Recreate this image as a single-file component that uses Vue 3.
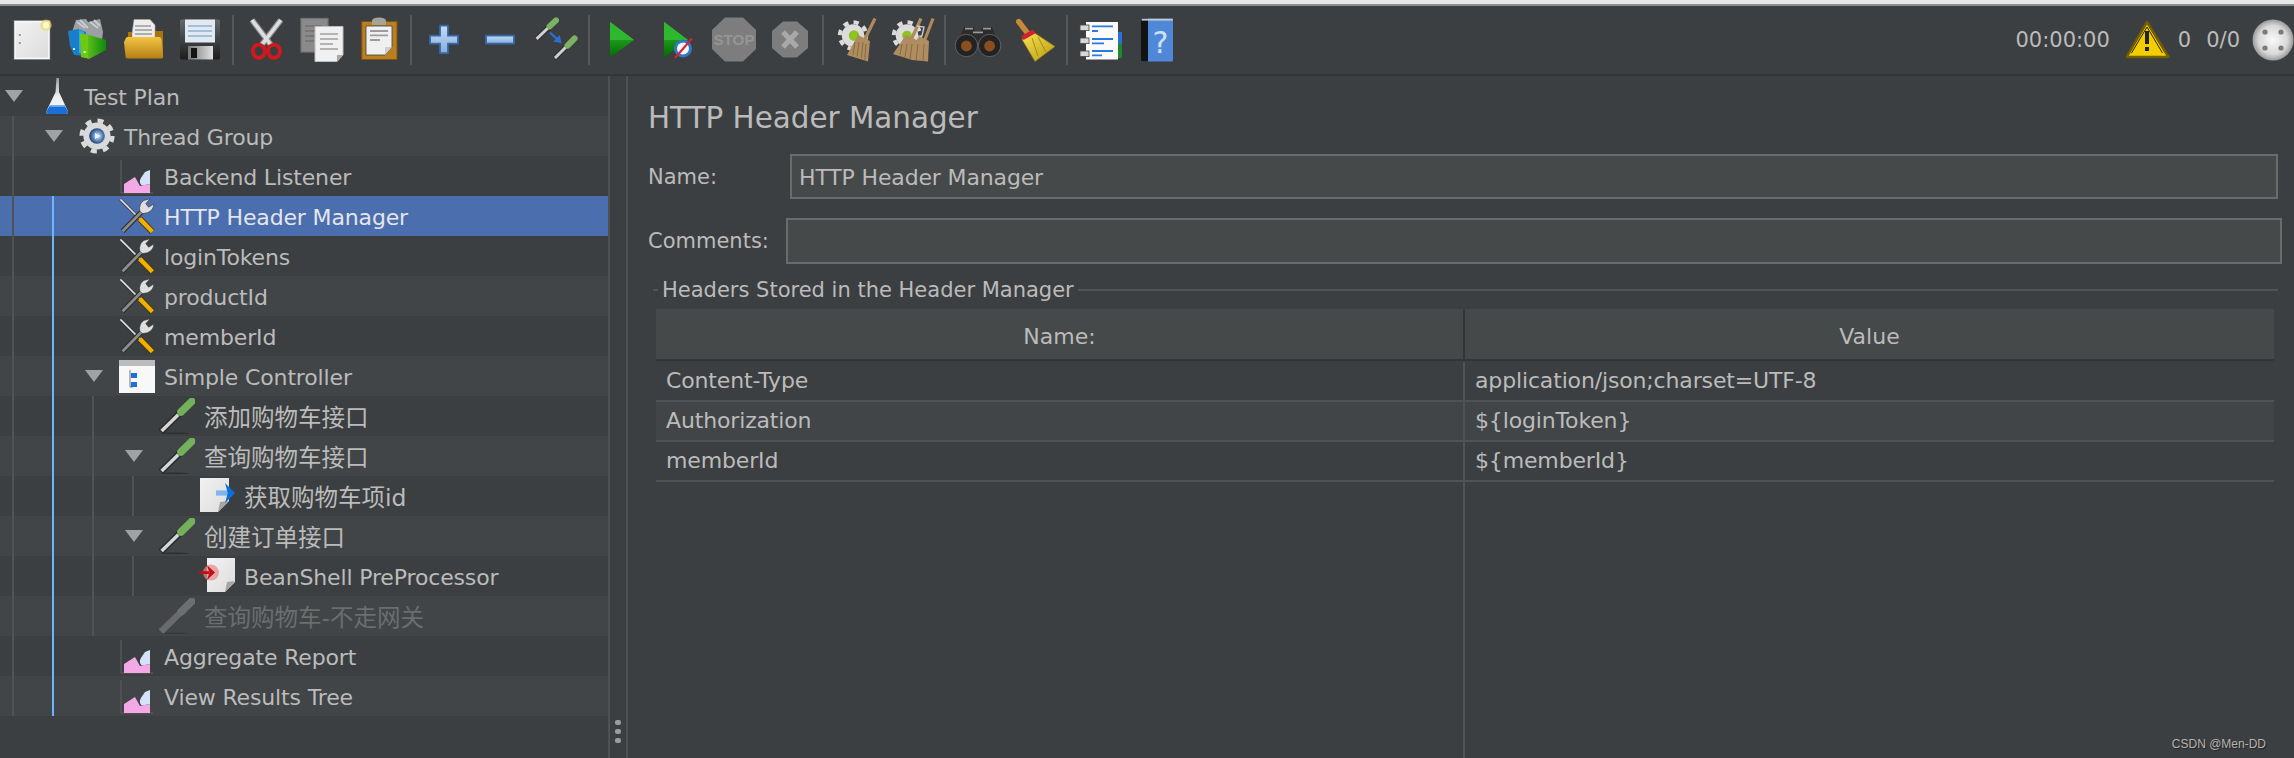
<script setup>
import { computed } from 'vue'

const toolbar = [
  ['new', 'templates', 'open', 'save'],
  ['cut', 'copy', 'paste'],
  ['plus', 'minus', 'toggle'],
  ['play', 'playnt', 'stop', 'shutdown'],
  ['clear', 'clearall'],
  ['search', 'broom'],
  ['fn', 'help'],
]

const ROW = 40
const INDENT = 40

const nodes = [
  { name: 'Test Plan', icon: 'flask', depth: 0, open: true },
  { name: 'Thread Group', icon: 'gear', depth: 1, open: true, lead: true },
  { name: 'Backend Listener', icon: 'chart', depth: 2 },
  { name: 'HTTP Header Manager', icon: 'tools', depth: 2, selected: true },
  { name: 'loginTokens', icon: 'tools', depth: 2 },
  { name: 'productId', icon: 'tools', depth: 2 },
  { name: 'memberId', icon: 'tools', depth: 2 },
  { name: 'Simple Controller', icon: 'ctrl', depth: 2, open: true },
  { name: '添加购物车接口', icon: 'dropper', depth: 3, cjk: true },
  { name: '查询购物车接口', icon: 'dropper', depth: 3, open: true, cjk: true },
  { name: '获取购物车项id', icon: 'post', depth: 4, cjk: true },
  { name: '创建订单接口', icon: 'dropper', depth: 3, open: true, cjk: true },
  { name: 'BeanShell PreProcessor', icon: 'pre', depth: 4 },
  { name: '查询购物车-不走网关', icon: 'dropper-off', depth: 3, cjk: true, disabled: true },
  { name: 'Aggregate Report', icon: 'chart', depth: 2 },
  { name: 'View Results Tree', icon: 'chart', depth: 2 },
]

// vertical tree lines, one per expanded node
const guides = computed(() => {
  const out = []
  nodes.forEach((n, i) => {
    if (!n.open) return
    let end = i + 1
    while (end < nodes.length && nodes[end].depth > n.depth) end++
    out.push({
      lead: n.lead,
      left: 12 + n.depth * INDENT,
      top: (i + 1 + (n.lead ? 1 : 0)) * ROW,
      height: (end - i - 1 - (n.lead ? 1 : 0)) * ROW,
    })
  })
  return out
})

const headers = [
  ['Content-Type', 'application/json;charset=UTF-8'],
  ['Authorization', '${loginToken}'],
  ['memberId', '${memberId}'],
]
</script>

<template>
  <div class="app">
    <svg class="defs" width="0" height="0" aria-hidden="true">
      <defs>
        <linearGradient id="gPaper" x1="0" y1="0" x2="1" y2="1">
          <stop offset="0" stop-color="#f2f2f2" /><stop offset="1" stop-color="#dcdcdc" />
        </linearGradient>
        <linearGradient id="gFolder" x1="0" y1="0" x2="0" y2="1">
          <stop offset="0" stop-color="#f2c544" /><stop offset="1" stop-color="#b67f14" />
        </linearGradient>
        <linearGradient id="gDisk" x1="0" y1="0" x2="0" y2="1">
          <stop offset="0" stop-color="#66686c" /><stop offset="1" stop-color="#1d1d1f" />
        </linearGradient>
        <linearGradient id="gShut" x1="0" y1="0" x2="1" y2="0">
          <stop offset="0" stop-color="#777" /><stop offset="1" stop-color="#e2e2e2" />
        </linearGradient>
        <linearGradient id="gBlue" x1="0" y1="0" x2="0" y2="1">
          <stop offset="0" stop-color="#c4dbf5" /><stop offset="1" stop-color="#87aede" />
        </linearGradient>
        <linearGradient id="gGreen" x1="0" y1="0" x2="0" y2="1">
          <stop offset="0" stop-color="#3bc43b" /><stop offset="1" stop-color="#006b00" />
        </linearGradient>
        <linearGradient id="gBookG" x1="0" y1="0" x2="1" y2="0">
          <stop offset="0" stop-color="#7ed321" /><stop offset="1" stop-color="#0c8a0c" />
        </linearGradient>
        <linearGradient id="gYellow" x1="0" y1="0" x2="1" y2="1">
          <stop offset="0" stop-color="#f9e255" /><stop offset="1" stop-color="#b89a10" />
        </linearGradient>
        <linearGradient id="gFlask" x1="0" y1="0" x2="0" y2="1">
          <stop offset="0" stop-color="#9a9c9e" /><stop offset="0.5" stop-color="#eceef0" /><stop offset="1" stop-color="#f8f8f8" />
        </linearGradient>
        <radialGradient id="gBall" cx="0.5" cy="0.5" r="0.5">
          <stop offset="0" stop-color="#fafafa" /><stop offset="0.7" stop-color="#d8d8d8" /><stop offset="1" stop-color="#9a9a9a" />
        </radialGradient>
        <radialGradient id="gHub" cx="0.55" cy="0.5" r="0.55">
          <stop offset="0" stop-color="#dfe9f5" /><stop offset="0.5" stop-color="#6b93c4" /><stop offset="1" stop-color="#15396e" />
        </radialGradient>

        <symbol id="i-new" viewBox="0 0 24 24">
          <rect x="3.5" y="2.75" width="17" height="18.5" fill="url(#gPaper)" stroke="#f8f8f8" />
          <rect x="3" y="2.25" width="18" height="19.5" fill="none" stroke="#777" stroke-width="0.3" />
          <rect x="5.4" y="9" width="1" height="1" fill="#999" /><rect x="5.4" y="13" width="1" height="1" fill="#999" />
          <circle cx="19" cy="4.6" r="2.8" fill="#e9d96a" opacity="0.7" />
          <circle cx="19" cy="4.6" r="1.6" fill="#fff8c8" />
        </symbol>

        <symbol id="i-templates" viewBox="0 0 24 24">
          <path d="M4 8 L6 2 L11 1.5 L12 3 L18 1.5 L19.5 8 L19 12 L5 12 Z" fill="#9ba0a4" />
          <path d="M6.5 3 L10.5 6 M13 3 L17 6 M8 2 L12 6 M15 2 L18 5" stroke="#c9cdd0" stroke-width="0.9" />
          <path d="M2 7.5 L7 6.5 L11 8 L11 20 L5 19.5 L3 15 Z" fill="#1a7fcb" />
          <path d="M7.5 7 L10 8 L10 19 L7.5 18.5 Z" fill="#35a6e6" />
          <rect x="4.5" y="16" width="1" height="1" fill="#cfe6f7" />
          <path d="M8 8.75 L12.5 9.5 L21 12 L21 17 L12.5 21.5 L9 20.5 Z" fill="url(#gBookG)" />
          <path d="M8 8.75 L12 9.5 L12 21 L8.5 20.5 Z" fill="#6fc911" />
          <rect x="9.8" y="17.5" width="1" height="1" fill="#e8ffe0" />
        </symbol>

        <symbol id="i-open" viewBox="0 0 24 24">
          <path d="M6 9 L7 1.75 L15 1.75 L17.5 4.5 L17.5 12 L6 12 Z" fill="#ececec" stroke="#aaa" stroke-width="0.3" />
          <path d="M7.5 5 H15.5 M7.5 7 H16 M7.5 9 H16" stroke="#9a9a9a" stroke-width="0.8" />
          <path d="M4 8 H6 L6 10.5 H17.5 L17.5 7.5 H21.5 L21.5 21 H4 Z" fill="#a87412" />
          <path d="M3 11 Q3 10.5 4 10.5 L19.5 10.5 Q20.5 10.5 20.7 11.5 L21.6 20.5 Q21.6 21.25 20.5 21.25 L4 21.25 Q3 21.25 2.8 20.5 L2 13 Z" fill="url(#gFolder)" />
        </symbol>

        <symbol id="i-save" viewBox="0 0 24 24">
          <path d="M2 2.5 Q2 1.75 3 1.75 H21 Q22 1.75 22 2.75 V21 Q22 21.75 21 21.75 H3 Q2 21.75 2 21 Z" fill="url(#gDisk)" />
          <rect x="4.5" y="1.75" width="15" height="11.5" fill="#e1eaf3" />
          <path d="M6 5 H18 M6 7.5 H18 M6 10 H18" stroke="#a5bfdb" stroke-width="0.9" />
          <rect x="6" y="15" width="12.5" height="6.75" fill="url(#gShut)" />
          <rect x="7.5" y="16" width="3" height="5" fill="#141414" />
        </symbol>

        <symbol id="i-cut" viewBox="0 0 24 24">
          <path d="M5 2 L14.5 14.5 M19.4 2 L9.8 14.5" stroke="#8e8e8e" stroke-width="3" />
          <path d="M5 2 L14.5 14.5 M19.4 2 L9.8 14.5" stroke="#dedede" stroke-width="1.8" />
          <ellipse cx="8.4" cy="17.6" rx="3" ry="3.3" fill="none" stroke="#d3181d" stroke-width="1.9" />
          <ellipse cx="16" cy="17.6" rx="3" ry="3.3" fill="none" stroke="#d3181d" stroke-width="1.9" />
        </symbol>

        <symbol id="i-copy" viewBox="0 0 24 24">
          <rect x="1.5" y="1.25" width="13.5" height="16.75" fill="#8a8a8a" stroke="#747474" stroke-width="0.6" />
          <path d="M3.5 5 H12 M3.5 7.5 H12 M3.5 10 H12 M3.5 12.5 H8" stroke="#767676" stroke-width="0.9" />
          <path d="M8.5 5.25 H22.5 V19.5 L19.5 22.75 H8.5 Z" fill="#f0f0f0" stroke="#bdbdbd" stroke-width="0.5" />
          <path d="M11 9 H20 M11 11.5 H20 M11 14 H17.5 M11 16.5 H20" stroke="#b3b3b3" stroke-width="0.9" />
          <path d="M19.5 22.75 V19.5 H22.5 Z" fill="#a9a9a9" />
        </symbol>

        <symbol id="i-paste" viewBox="0 0 24 24">
          <rect x="3.9" y="2.75" width="17.6" height="19" fill="#b97f20" stroke="#7d5511" stroke-width="0.5" />
          <path d="M6 5 H19 V15.5 L15.5 19.5 H6 Z" fill="#f0f0f0" stroke="#3f3f3f" stroke-width="0.4" />
          <path d="M8 7.5 H17 M8 9.7 H17 M8 12 H13 " stroke="#9b9b9b" stroke-width="0.9" />
          <path d="M15.5 19.5 V15.5 H19 Z" fill="#cfcfcf" />
          <path d="M9 4.5 V2.5 Q9 0.75 12.5 0.75 Q16 0.75 16 2.5 V4.5 Z" fill="#a4a499" />
        </symbol>

        <symbol id="i-plus" viewBox="0 0 24 24">
          <path d="M10 4.8 H14 V9.8 H19 V13.8 H14 V18.6 H10 V13.8 H5 V9.8 H10 Z" fill="url(#gBlue)" stroke="#3667a6" stroke-width="0.9" />
        </symbol>
        <symbol id="i-minus" viewBox="0 0 24 24">
          <rect x="5" y="9.8" width="14" height="4" fill="url(#gBlue)" stroke="#3667a6" stroke-width="0.9" />
        </symbol>

        <symbol id="i-toggle" viewBox="0 0 24 24">
          <path d="M2.3 11.4 L8 6" stroke="#2f2f2f" stroke-width="2.6" />
          <path d="M2.3 11.4 L8 6" stroke="#d0d0d0" stroke-width="1.5" />
          <path d="M8.8 5.2 L12 2.2" stroke="#7db262" stroke-width="3" stroke-linecap="round" />
          <path d="M11.5 21 L17 15.5" stroke="#2f2f2f" stroke-width="2.6" />
          <path d="M11.5 21 L17 15.5" stroke="#d0d0d0" stroke-width="1.5" />
          <path d="M17.8 14.8 L21.3 11.2" stroke="#7db262" stroke-width="3" stroke-linecap="round" />
          <path d="M9 8.3 L13 12" stroke="#2b6fd4" stroke-width="1.1" />
          <path d="M14.8 13.6 L10.6 12.8 L13.8 9.6 Z" fill="#2b6fd4" />
        </symbol>

        <symbol id="i-play" viewBox="0 0 24 24">
          <path d="M6 3 L18 12 L6 20.75 Z" fill="url(#gGreen)" />
          <path d="M6 3 L18 12 L6 12 Z" fill="#2db82d" />
        </symbol>
        <symbol id="i-playnt" viewBox="0 0 24 24">
          <path d="M5 3 L17 12 L5 20.75 Z" fill="url(#gGreen)" />
          <path d="M5 3 L17 12 L5 12 Z" fill="#2db82d" />
          <circle cx="14.5" cy="16.25" r="4.5" fill="#2f78c9" />
          <circle cx="14.5" cy="16.25" r="3" fill="#f2f6fa" />
          <path d="M10.5 21 L19 11.2" stroke="#d8232a" stroke-width="1.1" />
        </symbol>
        <symbol id="i-stop" viewBox="0 0 24 24">
          <path d="M7.5 0.75 H16.5 L23 7 V16.5 L16.5 22.75 H7.5 L1 16.5 V7 Z" fill="#7d7d7d" />
          <text x="12" y="14.6" text-anchor="middle" font-family="Liberation Sans, sans-serif" font-weight="700" font-size="7.6" fill="#959595">STOP</text>
        </symbol>
        <symbol id="i-shutdown" viewBox="0 0 24 24">
          <path d="M8.5 2.75 H15.5 L21 7.5 V16 L15.5 20.75 H8.5 L3 16 V7.5 Z" fill="#7d7d7d" />
          <path d="M8.5 8 L15.5 15.5 M15.5 8 L8.5 15.5" stroke="#a9a9a9" stroke-width="2.6" />
        </symbol>

        <symbol id="i-clear" viewBox="0 0 24 24">
          <circle cx="10.5" cy="9.75" r="5.6" fill="#dcdcdc" />
          <circle cx="10.5" cy="9.75" r="6.6" fill="none" stroke="#dcdcdc" stroke-width="2" stroke-dasharray="2.6 2.6" />
          <circle cx="11" cy="9.75" r="2.6" fill="#8ec21f" />
          <path d="M21.5 1.25 L15.5 13.5" stroke="#ad8a5c" stroke-width="1.6" />
          <path d="M13 9.5 L19 12.5 L18 22.75 L7.5 19.5 Z" fill="#b08d60" />
          <path d="M11.5 13 L10.5 19.5 M13.5 13 L12.5 20.3 M15.5 13 L14.7 21 M17 14 L16.4 21.8" stroke="#8a6a42" stroke-width="0.5" />
        </symbol>
        <symbol id="i-clearall" viewBox="0 0 24 24">
          <circle cx="9.5" cy="9.75" r="5.6" fill="#dcdcdc" />
          <circle cx="9.5" cy="9.75" r="6.6" fill="none" stroke="#dcdcdc" stroke-width="2" stroke-dasharray="2.6 2.6" />
          <circle cx="9.5" cy="9.75" r="2.4" fill="#8ec21f" />
          <path d="M16.5 1.25 L11 13 M22.5 1.25 L18 13" stroke="#ad8a5c" stroke-width="1.6" />
          <path d="M14.5 5 L18 5.5 L17 10" stroke="#c9c9c9" stroke-width="0.7" fill="none" />
          <path d="M9 9.5 L14.5 12 L15.5 10 L20.5 12.5 L20 22.75 L12 22 L2.5 19 Z" fill="#b08d60" />
          <path d="M7 14 L6 19.5 M9.5 14 L8.5 20.5 M12 14 L11 21.5 M15 14 L14 22 M18 14 L17.5 22.5" stroke="#8a6a42" stroke-width="0.5" />
        </symbol>

        <symbol id="i-search" viewBox="0 0 24 24">
          <path d="M2 13 L5 5.5 L10 5.5 L10.5 7.5 L13.5 7.5 L14 5.5 L19 5.5 L22 13 Z" fill="#2c2c2c" />
          <path d="M5.5 6.3 H9.5 M14.5 6.3 H18.5 M9.5 8.2 H14.5" stroke="#9a9a9a" stroke-width="0.8" />
          <circle cx="6.2" cy="14.75" r="5.6" fill="#232323" stroke="#6f6f6f" stroke-width="0.4" />
          <circle cx="17.8" cy="14.75" r="5.6" fill="#232323" stroke="#6f6f6f" stroke-width="0.4" />
          <circle cx="6.2" cy="15" r="2.7" fill="#8a4f1e" />
          <circle cx="17.8" cy="15" r="2.7" fill="#8a4f1e" />
        </symbol>
        <symbol id="i-broom" viewBox="0 0 24 24">
          <path d="M4.4 2.8 L9.3 9.3" stroke="#c58a38" stroke-width="2.8" stroke-linecap="round" />
          <path d="M6 11.75 L12 8.25 L22.5 15.25 L12.5 22.75 Z" fill="url(#gYellow)" stroke="#8d7a10" stroke-width="0.4" />
          <path d="M6.2 11 L12 7.8" stroke="#d3202a" stroke-width="2.3" />
          <path d="M11 11 L14 20 M14 10.5 L18 18" stroke="#a88d10" stroke-width="0.5" />
        </symbol>

        <symbol id="i-fn" viewBox="0 0 24 24">
          <rect x="21" y="8" width="2" height="6" fill="#2c6fd6" /><rect x="21" y="14" width="2" height="7" fill="#1d8a2a" />
          <rect x="5" y="3" width="16" height="18.75" fill="#fbfbfb" />
          <g fill="#d8d8d8" stroke="#444" stroke-width="0.4">
            <rect x="2" y="4.5" width="4.5" height="2.8" /><rect x="2" y="11" width="4.5" height="2.8" /><rect x="2" y="17.5" width="4.5" height="2.8" />
          </g>
          <path d="M8 5.2 H18.5 M8 7.5 H11 M8 11.5 H18.5 M8 13.7 H14 M8 17.5 H18.5 M8 19.7 H13" stroke="#2a78e0" stroke-width="0.9" />
        </symbol>
        <symbol id="i-help" viewBox="0 0 24 24">
          <rect x="4.5" y="1.25" width="16" height="21.5" rx="0.5" fill="#4f88d8" />
          <rect x="4.5" y="1.25" width="3.5" height="21.5" fill="#131313" />
          <rect x="4.8" y="1.4" width="15.6" height="0.9" fill="#c7c9cc" />
          <text x="14.2" y="18.6" text-anchor="middle" font-family="DejaVu Sans, sans-serif" font-size="15" fill="#cfe0f5">?</text>
        </symbol>

        <symbol id="i-warn" viewBox="0 0 44 40">
          <path d="M21 2 L42.5 37 H0.5 Z" fill="#f2cd00" stroke="#705e00" stroke-width="2.5" stroke-linejoin="round" />
          <path d="M21 7 L36.5 33" stroke="#2a2400" stroke-width="1" /><path d="M21 7 L5.5 33" stroke="#2a2400" stroke-width="1" />
          <rect x="19" y="11" width="4" height="13" fill="#222" /><rect x="19" y="27" width="4" height="4" fill="#222" />
        </symbol>
        <symbol id="i-ball" viewBox="0 0 42 42">
          <circle cx="21" cy="21" r="20.5" fill="url(#gBall)" />
          <g fill="#7a7a7a">
            <circle cx="13" cy="13" r="2.6" /><circle cx="29" cy="13" r="2.6" /><circle cx="13" cy="29" r="2.6" /><circle cx="29" cy="29" r="2.6" />
          </g>
        </symbol>

        <symbol id="i-flask" viewBox="0 0 18 18">
          <path d="M8.7 0 L10 0 L10 7 L14.5 16.8 Q14.7 18 13.2 18 L4.8 18 Q3.3 18 3.6 16.8 L8.3 7 Z" fill="url(#gFlask)" />
          <path d="M5.6 13.5 H12.6 L14.5 16.8 Q14.7 18 13.2 18 L4.8 18 Q3.3 18 3.6 16.8 Z" fill="#1c6fd8" />
          <path d="M5.6 13.5 H12.6 L13 14.4 H5.2 Z" fill="#7ab2f0" />
        </symbol>
        <symbol id="i-gear" viewBox="0 0 18 18">
          <circle cx="9" cy="9" r="6.8" fill="#dadada" />
          <circle cx="9" cy="9" r="7.7" fill="none" stroke="#dadada" stroke-width="2.2" stroke-dasharray="3 3.05" />
          <circle cx="9" cy="9" r="3.9" fill="url(#gHub)" />
          <path d="M8 7.5 L10.8 9 L8 10.5 Z" fill="#eef3f9" />
        </symbol>
        <symbol id="i-chart" viewBox="0 0 18 18">
          <path d="M1 1 V17.5 H17" fill="none" stroke="#5f6163" stroke-width="0.5" />
          <path d="M2.5 17.5 V13 L8 9.5 L10.5 14 L15.5 13 V17.5 Z" fill="#f5a8e6" />
          <path d="M15.5 6 V13 L11.4 13.8 Q9.6 12 11.2 9.6 L13 7 Z" fill="#d5e3fa" />
        </symbol>
        <symbol id="i-tools" viewBox="0 0 18 18">
          <path d="M0.7 0.7 L10.5 10.5" stroke="#2b2b2b" stroke-width="1.4" />
          <path d="M0.7 0.7 L10.5 10.5" stroke="#e6e6e6" stroke-width="0.8" />
          <path d="M1.8 16.6 L11.6 6.6" stroke="#2e2e2e" stroke-width="2.6" />
          <path d="M1.8 16.6 L11.6 6.6" stroke="#8d8d8d" stroke-width="1.4" />
          <path d="M10.4 6.6 Q9.8 3 12.4 1.2 L15.6 0.4 L13.4 2.8 L14.8 4.6 L17.4 3 Q17.4 6 14.2 7.4 L11.8 7.8 Z" fill="#dedede" stroke="#333" stroke-width="0.3" />
          <path d="M10.3 10.3 L16.7 16.9" stroke="#3f3000" stroke-width="3" />
          <path d="M10.3 10.3 L16.7 16.9" stroke="#f0b000" stroke-width="2.2" />
        </symbol>
        <symbol id="i-ctrl" viewBox="0 0 18 18">
          <rect x="0" y="1" width="18" height="16.5" fill="#f8f8f8" />
          <rect x="0" y="1" width="18" height="3" fill="#bcbcbc" />
          <path d="M5.5 6 V14.5 H7" fill="none" stroke="#777" stroke-width="0.5" />
          <rect x="6" y="7.5" width="3" height="2.5" fill="#1f6fd8" /><rect x="6" y="12" width="3" height="2.5" fill="#1f6fd8" />
        </symbol>
        <symbol id="i-dropper" viewBox="0 0 18 18">
          <ellipse cx="8" cy="17.6" rx="7" ry="0.4" fill="#2d2f30" />
          <path d="M0.9 16.9 L9.6 8.4" stroke="#2a2a2a" stroke-width="3.2" />
          <path d="M1.3 16.5 L9.6 8.4" stroke="#d6d6d6" stroke-width="1.7" />
          <path d="M8.8 6.6 L11.4 9.2" stroke="#2a2a2a" stroke-width="1.2" />
          <path d="M11 7 L16.4 1.7" stroke="#72b05a" stroke-width="3.8" stroke-linecap="round" />
        </symbol>
        <symbol id="i-dropper-off" viewBox="0 0 18 18">
          <ellipse cx="8" cy="17.6" rx="7" ry="0.4" fill="#36383a" />
          <path d="M1 16.8 L10 8" stroke="#6a6a6a" stroke-width="3.2" />
          <path d="M11 7 L16.4 1.7" stroke="#6e6e6e" stroke-width="3.8" stroke-linecap="round" />
        </symbol>
        <symbol id="i-post" viewBox="0 0 18 18">
          <path d="M0.5 0 H15 V11.5 L9.5 17 H0.5 Z" fill="url(#gPaper)" />
          <path d="M9.5 17 L15 11.5 L10.5 12 Z" fill="#a5a5a5" />
          <path d="M8.5 6.2 H14.5 V8.8 H8.5 Z" fill="#7fb4ec" />
          <path d="M13 2.5 L18 7.5 L13 12.5 L14.4 7.5 Z" fill="#0b6fdc" />
        </symbol>
        <symbol id="i-pre" viewBox="0 0 18 18">
          <path d="M4 0 H18.5 V11.5 L13 17 H4 Z" fill="url(#gPaper)" />
          <path d="M13 17 L18 11.5 L14 12 Z" fill="#a5a5a5" />
          <circle cx="6" cy="7.3" r="4" fill="#e58a8f" opacity="0.7" />
          <path d="M0 6.6 H5 V8 H0 Z" fill="#c00e14" />
          <path d="M4 3.6 L8 7.3 L4 11 L5.2 7.3 Z" fill="#c00e14" />
        </symbol>
      </defs>
    </svg>

    <div class="topstrip"></div>

    <header class="toolbar">
      <template v-for="(group, g) in toolbar" :key="g">
        <span v-if="g > 0" class="sep"></span>
        <button v-for="b in group" :key="b" class="tool">
          <svg class="tool-icon"><use :href="'#i-' + b" /></svg>
        </button>
      </template>
      <div class="status">
        <span class="time">00:00:00</span>
        <svg class="warn"><use href="#i-warn" /></svg>
        <span class="count">0</span>
        <span class="threads">0/0</span>
        <svg class="ball"><use href="#i-ball" /></svg>
      </div>
    </header>

    <main class="body">
      <aside class="tree">
        <div
          v-for="(n, i) in nodes"
          :key="i"
          class="node"
          :class="{ odd: i % 2 === 1, selected: n.selected, disabled: n.disabled, cjk: n.cjk }"
          :style="{ paddingLeft: n.depth * INDENT + 'px' }"
        >
          <span class="twist"><i v-if="n.open" class="arrow"></i></span>
          <svg class="node-icon"><use :href="'#i-' + n.icon" /></svg>
          <span class="node-name">{{ n.name }}</span>
        </div>
        <span
          v-for="(l, i) in guides"
          :key="'g' + i"
          class="guide"
          :class="{ lead: l.lead }"
          :style="{ left: l.left + 'px', top: l.top + 'px', height: l.height + 'px' }"
        ></span>
      </aside>

      <div class="divider">
        <div class="grip"><i></i><i></i><i></i></div>
      </div>

      <section class="panel">
        <h1 class="title">HTTP Header Manager</h1>
        <div class="field name-field">
          <label>Name:</label>
          <div class="input">HTTP Header Manager</div>
        </div>
        <div class="field comments-field">
          <label>Comments:</label>
          <div class="input"></div>
        </div>

        <div class="legend">
          <span class="legend-tick"></span>
          <span class="legend-text">Headers Stored in the Header Manager</span>
          <span class="legend-line"></span>
        </div>

        <div class="table">
          <div class="thead">
            <div class="th">Name:</div>
            <div class="th">Value</div>
          </div>
          <div v-for="(h, i) in headers" :key="i" class="tr" :class="{ odd: i % 2 === 1 }">
            <div class="td">{{ h[0] }}</div>
            <div class="td">{{ h[1] }}</div>
          </div>
          <div class="tr filler">
            <div class="td"></div>
            <div class="td"></div>
          </div>
        </div>
      </section>
    </main>

    <div class="watermark">CSDN @Men-DD</div>
  </div>
</template>

<style>
html, body { margin: 0; background: #3c3f41; }
</style>

<style scoped>
.app {
  position: relative;
  width: 2294px;
  height: 758px;
  overflow: hidden;
  display: flex;
  flex-direction: column;
  background: #3c3f41;
  color: #bbbbbb;
  font-family: "DejaVu Sans", "Noto Sans CJK SC", sans-serif;
  font-size: 22px;
}
.defs { position: absolute; }

.topstrip {
  height: 4px;
  flex: none;
  background: #e6e6e6;
  border-bottom: 2px solid #8e8e8e;
}

.toolbar {
  height: 68px;
  flex: none;
  display: flex;
  align-items: center;
  padding-left: 4px;
  border-bottom: 2px solid #333537;
}
.tool {
  width: 56px;
  height: 48px;
  padding: 0;
  border: 0;
  background: none;
  display: flex;
  justify-content: center;
}
.tool-icon { width: 48px; height: 48px; }
.sep {
  width: 2px;
  height: 50px;
  margin: 0 4px;
  background: #55585a;
}
.status {
  margin-left: auto;
  display: flex;
  align-items: center;
  font-size: 21px;
}
.time { margin-right: 16px; }
.warn { width: 44px; height: 40px; margin-right: 8px; }
.count { margin-right: 15px; }
.threads { margin-right: 12px; }
.ball { width: 42px; height: 42px; }

.body {
  flex: 1;
  display: flex;
  min-height: 0;
}

.tree {
  position: relative;
  width: 608px;
  flex: none;
}
.node {
  height: 40px;
  display: flex;
  align-items: center;
  box-sizing: border-box;
  letter-spacing: -0.15px;
}
.node.odd { background: #414547; }
.node.selected { background: #4b6eaf; color: #e4e6ea; }
.node.disabled { color: #6b6d6f; }
.node.cjk { font-size: 23.5px; letter-spacing: 0; }
.twist {
  width: 39px;
  flex: none;
  display: flex;
  padding-left: 5px;
  box-sizing: border-box;
}
.arrow {
  width: 0;
  height: 0;
  border-left: 9px solid transparent;
  border-right: 9px solid transparent;
  border-top: 12px solid #a0a2a4;
}
.node-icon { width: 36px; height: 36px; flex: none; margin-right: 9px; }
.node-name { white-space: nowrap; padding-top: 2px; }
.node.cjk .node-name { padding-top: 0; }

.guide {
  position: absolute;
  width: 2px;
  background: #505254;
}
.guide.lead { background: #6db4ff; }

.divider {
  width: 20px;
  flex: none;
  box-sizing: border-box;
  border-left: 2px solid #4e5052;
  border-right: 2px solid #4e5052;
  display: flex;
  flex-direction: column;
  align-items: center;
  padding-top: 644px;
}
.grip { display: flex; flex-direction: column; gap: 4px; }
.grip i { display: block; width: 6px; height: 5px; border-radius: 2px; background: #9a9c9e; }

.panel {
  flex: 1;
  min-width: 0;
  display: flex;
  flex-direction: column;
  padding-left: 20px;
}
.title {
  margin: 21px 0 0;
  height: 42px;
  line-height: 42px;
  font-size: 29.4px;
  font-weight: 400;
}
.field {
  display: flex;
  align-items: stretch;
}
.field label { line-height: 47px; flex: none; font-size: 21px; }
.input {
  flex: 1;
  border: 2px solid #6a6c6c;
  background: #464949;
  line-height: 43px;
  padding-left: 7px;
  letter-spacing: -0.15px;
}
.name-field { margin-top: 15px; height: 45px; margin-right: 16px; }
.name-field label { width: 142px; }
.comments-field { margin-top: 19px; height: 46px; margin-right: 12px; }
.comments-field label { width: 138px; }

.legend {
  margin-top: 13px;
  height: 26px;
  display: flex;
  align-items: center;
  margin-left: 5px;
  margin-right: 16px;
  font-size: 21px;
}
.legend-tick { width: 5px; height: 2px; background: #505254; margin-right: 4px; }
.legend-text { margin-right: 4px; }
.legend-line { flex: 1; height: 2px; background: #505254; }

.table {
  flex: 1;
  display: flex;
  flex-direction: column;
  margin: 6px 20px 0 8px;
}
.thead {
  height: 50px;
  flex: none;
  display: grid;
  grid-template-columns: 809px 1fr;
  background: #45494a;
  border-bottom: 2px solid #333537;
  margin-bottom: 1px;
}
.th {
  display: flex;
  align-items: center;
  justify-content: center;
  padding-top: 4px;
}
.th:first-child { border-right: 2px solid #333537; }
.tr {
  height: 40px;
  flex: none;
  box-sizing: border-box;
  display: grid;
  grid-template-columns: 809px 1fr;
  border-bottom: 2px solid #505254;
}
.tr.odd { background: #414547; }
.td {
  display: flex;
  align-items: center;
  padding-left: 10px;
  padding-bottom: 2px;
  letter-spacing: -0.15px;
}
.td:first-child { border-right: 2px solid #505254; }
.tr.filler { flex: 1; border-bottom: 0; }

.watermark {
  position: absolute;
  right: 28px;
  bottom: 7px;
  font-family: "Liberation Sans", sans-serif;
  font-size: 12px;
  color: #b4b4b4;
  text-shadow: 1px 1px 1px #222;
}
</style>
